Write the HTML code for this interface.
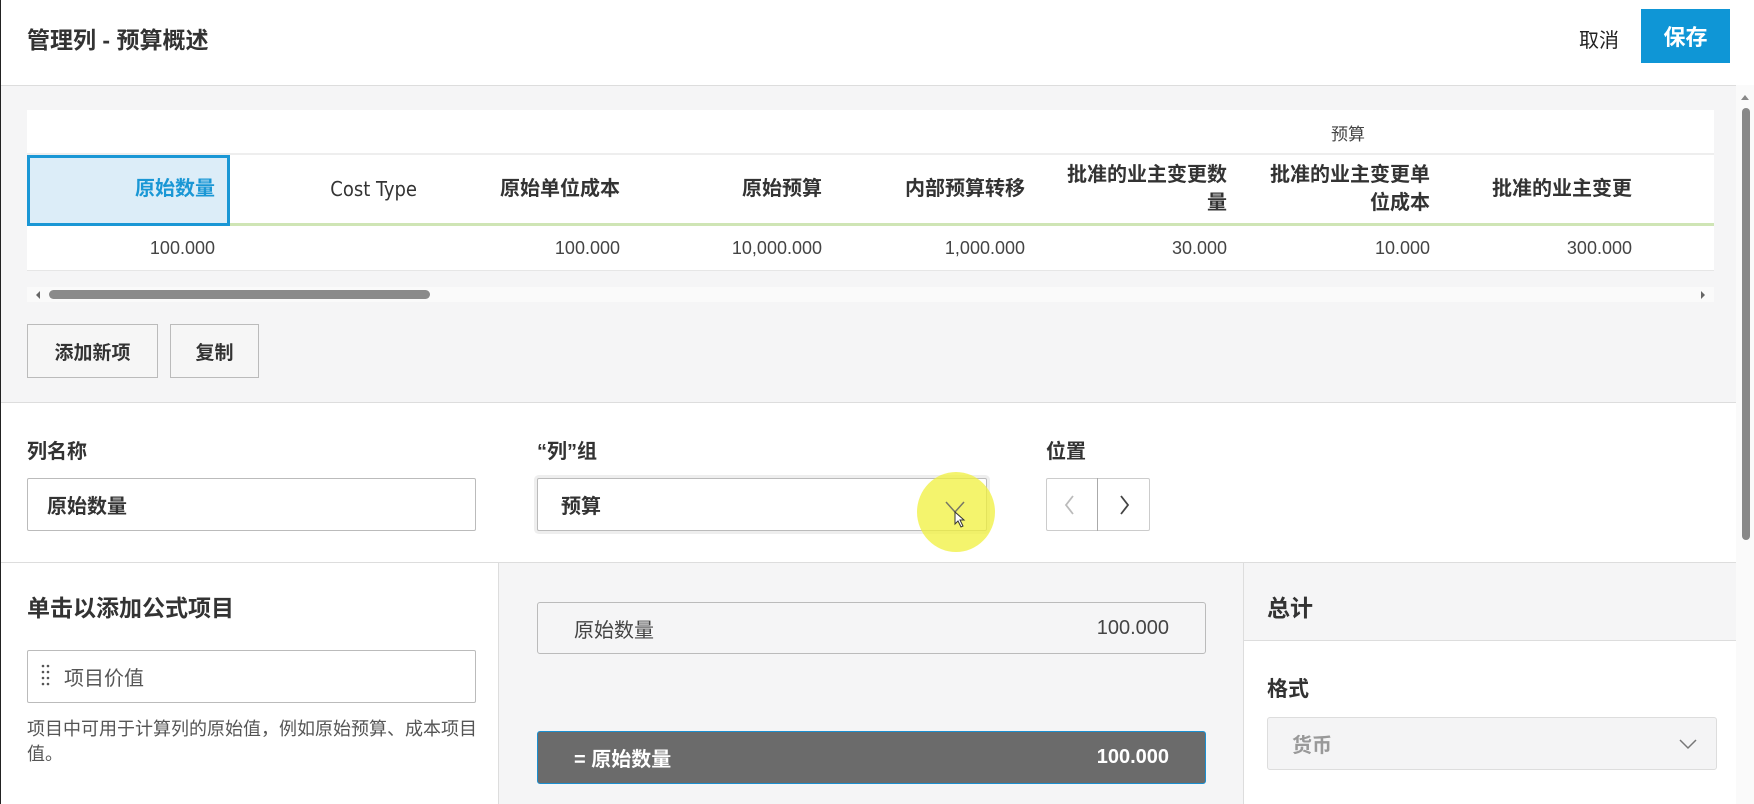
<!DOCTYPE html>
<html><head><meta charset="utf-8"><style>
*{box-sizing:border-box;margin:0;padding:0}
body{width:1754px;height:804px;overflow:hidden;background:#fff;font-family:"Liberation Sans","Noto Sans CJK SC",sans-serif;color:#333;position:relative}
.a{position:absolute}
.b{font-weight:bold}
.hc{position:absolute;top:153px;height:72px;width:202px;display:flex;align-items:center;justify-content:flex-end;text-align:right;padding-right:14px;padding-left:22px;font-weight:bold;font-size:20px;color:#333;line-height:28px}
.dc{position:absolute;top:225px;height:46px;width:202px;display:flex;align-items:center;justify-content:flex-end;padding-right:14px;font-size:18px;color:#444}
.btn{position:absolute;border:1px solid #bbb;background:#f6f6f6;display:flex;align-items:center;justify-content:center;font-weight:bold;font-size:19px;color:#333}
.inp{position:absolute;border:1px solid #bbb;border-radius:2px;background:#fff;display:flex;align-items:center;font-size:20px}
</style></head><body>
<div class="a" style="left:0;top:0;width:1px;height:804px;background:#222"></div>
<div class="a b" style="left:27px;top:21px;font-size:23px;color:#333">管理列 - 预算概述</div>
<div class="a" style="left:1579px;top:24px;font-size:20px;color:#222">取消</div>
<div class="a b" style="left:1641px;top:9px;width:89px;height:54px;background:#0f96d6;color:#fff;font-size:22px;display:flex;align-items:center;justify-content:center">保存</div>
<div class="a" style="left:1px;top:85px;width:1735px;height:318px;background:#f5f5f6;border-top:1px solid #ddd"></div>
<div class="a" style="left:27px;top:110px;width:1687px;height:161px;background:#fff;border-bottom:1px solid #e6e6e6"></div>
<div class="a" style="left:27px;top:153px;width:1687px;height:2px;background:#eee"></div>
<div class="a" style="left:1331px;top:120px;font-size:17px;color:#444">预算</div>
<div class="a" style="left:27px;top:223px;width:1687px;height:3px;background:#cfe5b5"></div>
<div class="a" style="left:27px;top:155px;width:203px;height:71px;background:#dcedf8;border:3px solid #1a97d5"></div>
<div class="hc" style="left:27px;color:#1a97d5">原始数量</div>
<div class="hc" style="left:229px;font-weight:normal;font-family:'DejaVu Sans Condensed','Liberation Sans',sans-serif">Cost Type</div>
<div class="hc" style="left:432px">原始单位成本</div>
<div class="hc" style="left:634px">原始预算</div>
<div class="hc" style="left:837px">内部预算转移</div>
<div class="hc" style="left:1039px">批准的业主变更数量</div>
<div class="hc" style="left:1242px">批准的业主变更单位成本</div>
<div class="hc" style="left:1444px">批准的业主变更</div>
<div class="dc" style="left:27px">100.000</div>
<div class="dc" style="left:432px">100.000</div>
<div class="dc" style="left:634px">10,000.000</div>
<div class="dc" style="left:837px">1,000.000</div>
<div class="dc" style="left:1039px">30.000</div>
<div class="dc" style="left:1242px">10.000</div>
<div class="dc" style="left:1444px">300.000</div>
<div class="a" style="left:27px;top:287px;width:1687px;height:15px;background:#fafafa"></div>
<div class="a" style="left:36px;top:291px;width:0;height:0;border-top:4px solid transparent;border-bottom:4px solid transparent;border-right:4px solid #666"></div>
<div class="a" style="left:1701px;top:291px;width:0;height:0;border-top:4px solid transparent;border-bottom:4px solid transparent;border-left:4px solid #666"></div>
<div class="a" style="left:49px;top:290px;width:381px;height:9px;border-radius:5px;background:#8a8a8a"></div>
<div class="btn" style="left:27px;top:324px;width:131px;height:54px">添加新项</div>
<div class="btn" style="left:170px;top:324px;width:89px;height:54px">复制</div>
<div class="a" style="left:1px;top:402px;width:1735px;height:1px;background:#ddd"></div>
<div class="a b" style="left:27px;top:435px;font-size:20px">列名称</div>
<div class="a b" style="left:537px;top:435px;font-size:20px">“列”组</div>
<div class="a b" style="left:1046px;top:435px;font-size:20px">位置</div>
<div class="inp b" style="left:27px;top:478px;width:449px;height:53px;padding-left:19px">原始数量</div>
<div class="inp b" style="left:537px;top:478px;width:450px;height:53px;padding-left:23px;box-shadow:0 0 0 3px #eee">预算</div>
<div class="a" style="left:917px;top:472px;width:78px;height:80px;border-radius:50%;background:rgba(240,240,60,.75)"></div>
<svg class="a" style="left:944px;top:498px" width="24" height="30"><path d="M2 4 L11 14 L20 4" stroke="#776" stroke-width="1.5" fill="none"/><path d="M11 14 L11 26 L14 23 L17 29 L19 28 L16 22 L20 22 Z" fill="#fff" stroke="#333" stroke-width="1"/></svg>
<div class="a" style="left:1046px;top:478px;width:104px;height:53px;border:1px solid #ccc;border-radius:2px;background:#fff"></div>
<div class="a" style="left:1097px;top:478px;width:1px;height:53px;background:#aaa"></div>
<svg class="a" style="left:1062px;top:493px" width="80" height="24"><path d="M11 3 L4 12 L11 21" stroke="#bbb" stroke-width="1.8" fill="none"/><path d="M59 3 L66 12 L59 21" stroke="#444" stroke-width="1.8" fill="none"/></svg>
<div class="a" style="left:1px;top:562px;width:1735px;height:1px;background:#ddd"></div>
<div class="a" style="left:498px;top:563px;width:745px;height:241px;background:#f5f5f6;border-left:1px solid #ddd"></div>
<div class="a" style="left:1243px;top:563px;width:493px;height:78px;background:#f5f5f6;border-left:1px solid #ddd;border-bottom:1px solid #ddd"></div>
<div class="a" style="left:1243px;top:641px;width:493px;height:163px;background:#fff;border-left:1px solid #ddd"></div>
<div class="a b" style="left:27px;top:589px;font-size:23px">单击以添加公式项目</div>
<div class="inp" style="left:27px;top:650px;width:449px;height:53px;padding-left:36px;color:#555">项目价值</div>
<svg class="a" style="left:40px;top:664px" width="12" height="24"><g fill="#555"><circle cx="3" cy="2" r="1.3"/><circle cx="8" cy="2" r="1.3"/><circle cx="3" cy="8" r="1.3"/><circle cx="8" cy="8" r="1.3"/><circle cx="3" cy="14" r="1.3"/><circle cx="8" cy="14" r="1.3"/><circle cx="3" cy="20" r="1.3"/><circle cx="8" cy="20" r="1.3"/></g></svg>
<div class="a" style="left:27px;top:717px;width:455px;font-size:18px;line-height:25px;color:#555">项目中可用于计算列的原始值，例如原始预算、成本项目值。</div>
<div class="a" style="left:537px;top:602px;width:669px;height:52px;border:1px solid #bbb;border-radius:3px;background:#f5f5f6;display:flex;align-items:center;justify-content:space-between;padding:0 36px;font-size:20px;color:#444"><span>原始数量</span><span>100.000</span></div>
<div class="a b" style="left:537px;top:731px;width:669px;height:53px;border:1px solid #1a8fd0;border-radius:3px;background:#6b6b6b;display:flex;align-items:center;justify-content:space-between;padding:0 36px 0 36px;font-size:20px;color:#fff"><span>= 原始数量</span><span>100.000</span></div>
<div class="a b" style="left:1267px;top:589px;font-size:23px">总计</div>
<div class="a b" style="left:1267px;top:673px;font-size:21px">格式</div>
<div class="a b" style="left:1267px;top:717px;width:450px;height:53px;border:1px solid #ddd;border-radius:3px;background:#f4f4f5;display:flex;align-items:center;padding-left:24px;font-size:20px;color:#999">货币</div>
<svg class="a" style="left:1678px;top:737px" width="20" height="14"><path d="M2 3 L10 11 L18 3" stroke="#777" stroke-width="1.5" fill="none"/></svg>
<div class="a" style="left:1736px;top:85px;width:18px;height:719px;background:#fafafa"></div>
<div class="a" style="left:1741px;top:95px;width:0;height:0;border-left:4px solid transparent;border-right:4px solid transparent;border-bottom:5px solid #888"></div>
<div class="a" style="left:1742px;top:108px;width:8px;height:432px;border-radius:4px;background:#888"></div>
</body></html>
